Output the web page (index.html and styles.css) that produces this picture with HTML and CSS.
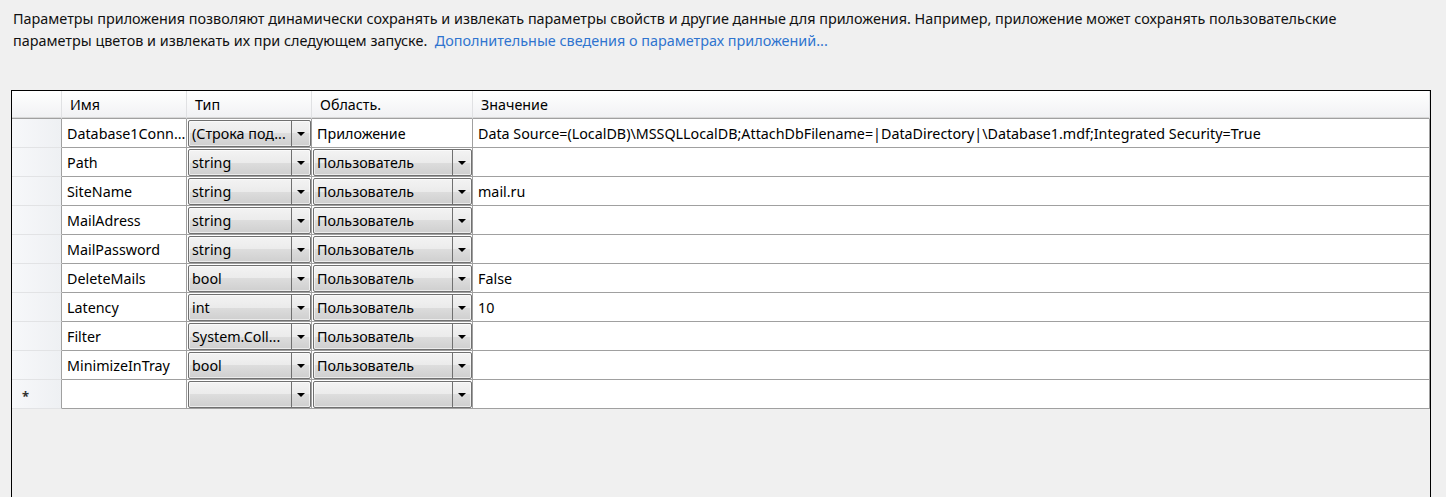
FILE: index.html
```html
<!DOCTYPE html>
<html lang="ru">
<head>
  <meta charset="UTF-8">
  <title>Параметры</title>
  <link rel="stylesheet" href="styles.css">
</head>
<body>
  <p class="intro">Параметры приложения позволяют динамически сохранять и извлекать параметры свойств и другие данные для приложения. Например, приложение может сохранять пользовательские<br>параметры цветов и извлекать их при следующем запуске.&nbsp; <a href="#">Дополнительные сведения о параметрах приложений...</a></p>

  <div class="grid">
    <div class="row head">
      <div class="rh"></div>
      <div class="hc">Имя</div>
      <div class="hc">Тип</div>
      <div class="hc">Область.</div>
      <div class="hc">Значение</div>
    </div>

    <div class="row">
      <div class="rh"></div>
      <div class="cell">Database1Conn...</div>
      <div class="cell"><div class="combo"><span>(Строка под...</span><b></b></div></div>
      <div class="cell">Приложение</div>
      <div class="cell">Data Source=(LocalDB)\MSSQLLocalDB;AttachDbFilename=|DataDirectory|\Database1.mdf;Integrated Security=True</div>
    </div>

    <div class="row">
      <div class="rh"></div>
      <div class="cell">Path</div>
      <div class="cell"><div class="combo"><span>string</span><b></b></div></div>
      <div class="cell"><div class="combo"><span>Пользователь</span><b></b></div></div>
      <div class="cell"></div>
    </div>

    <div class="row">
      <div class="rh"></div>
      <div class="cell">SiteName</div>
      <div class="cell"><div class="combo"><span>string</span><b></b></div></div>
      <div class="cell"><div class="combo"><span>Пользователь</span><b></b></div></div>
      <div class="cell">mail.ru</div>
    </div>

    <div class="row">
      <div class="rh"></div>
      <div class="cell">MailAdress</div>
      <div class="cell"><div class="combo"><span>string</span><b></b></div></div>
      <div class="cell"><div class="combo"><span>Пользователь</span><b></b></div></div>
      <div class="cell"></div>
    </div>

    <div class="row">
      <div class="rh"></div>
      <div class="cell">MailPassword</div>
      <div class="cell"><div class="combo"><span>string</span><b></b></div></div>
      <div class="cell"><div class="combo"><span>Пользователь</span><b></b></div></div>
      <div class="cell"></div>
    </div>

    <div class="row">
      <div class="rh"></div>
      <div class="cell">DeleteMails</div>
      <div class="cell"><div class="combo"><span>bool</span><b></b></div></div>
      <div class="cell"><div class="combo"><span>Пользователь</span><b></b></div></div>
      <div class="cell">False</div>
    </div>

    <div class="row">
      <div class="rh"></div>
      <div class="cell">Latency</div>
      <div class="cell"><div class="combo"><span>int</span><b></b></div></div>
      <div class="cell"><div class="combo"><span>Пользователь</span><b></b></div></div>
      <div class="cell">10</div>
    </div>

    <div class="row">
      <div class="rh"></div>
      <div class="cell">Filter</div>
      <div class="cell"><div class="combo"><span>System.Coll...</span><b></b></div></div>
      <div class="cell"><div class="combo"><span>Пользователь</span><b></b></div></div>
      <div class="cell"></div>
    </div>

    <div class="row">
      <div class="rh"></div>
      <div class="cell">MinimizeInTray</div>
      <div class="cell"><div class="combo"><span>bool</span><b></b></div></div>
      <div class="cell"><div class="combo"><span>Пользователь</span><b></b></div></div>
      <div class="cell"></div>
    </div>

    <div class="row">
      <div class="rh new">*</div>
      <div class="cell"></div>
      <div class="cell"><div class="combo"><span></span><b></b></div></div>
      <div class="cell"><div class="combo"><span></span><b></b></div></div>
      <div class="cell"></div>
    </div>
  </div>
</body>
</html>
```

FILE: styles.css
```css
body {
  margin: 0;
  padding: 8px 15px 0 11px;
  background: #f0f0f0;
  font-family: 'Noto Sans', 'Open Sans', sans-serif;
  color: #000;
  overflow: hidden;
}

.intro {
  margin: 0 0 38px 2px;
  font-size: 14.4px;
  line-height: 22px;
  white-space: nowrap;
  color: #111;
}

.intro a {
  color: #2f74cf;
  text-decoration: none;
}

.grid {
  border: 1px solid #000;
  border-bottom: none;
  height: 420px;
  font-size: 14.3px;
}

.row {
  display: grid;
  grid-template-columns: 50px 125px 125px 161px 1fr;
  height: 29px;
}

.row.head {
  height: 28px;
}

.rh {
  background: linear-gradient(to right, #f7f8fa, #eef0f3);
  border-right: 1px solid #a0a0a0;
  border-bottom: 1px solid #e2e3e5;
  display: flex;
  align-items: center;
  padding-left: 10px;
}

.rh.new {
  font-size: 13px;
  font-weight: bold;
  color: #333;
  padding-top: 4px;
}

.head .rh,
.hc {
  background: linear-gradient(#ffffff, #f0f1f3);
  border-right: 1px solid #e0e1e3;
  border-bottom: 1px solid #a0a0a0;
  box-shadow: inset 0 -1px #d8d8d8;
}

.hc {
  padding-left: 8px;
  display: flex;
  align-items: center;
  white-space: nowrap;
}

.cell {
  background: #fff;
  border-right: 1px solid #a0a0a0;
  border-bottom: 1px solid #a0a0a0;
  padding-left: 5px;
  display: flex;
  align-items: center;
  white-space: nowrap;
  overflow: hidden;
}

.cell:has(.combo) {
  padding: 1px 0 0 1px;
  align-items: stretch;
}

.combo {
  flex: 1;
  display: flex;
  border: 1px solid #707070;
  border-radius: 2px;
  background: linear-gradient(#f3f3f3 0%, #ebebeb 50%, #dddddd 50%, #cfcfcf 100%);
  box-shadow: inset 0 0 0 1px rgba(255, 255, 255, 0.6);
}

.combo span {
  flex: 1;
  padding-left: 3px;
  display: flex;
  align-items: center;
  overflow: hidden;
}

.combo b {
  width: 18px;
  border-left: 1px solid #707070;
  position: relative;
}

.combo b::after {
  content: '';
  position: absolute;
  left: 5px;
  top: 11px;
  border-left: 4px solid transparent;
  border-right: 4px solid transparent;
  border-top: 4px solid #000;
}
```
